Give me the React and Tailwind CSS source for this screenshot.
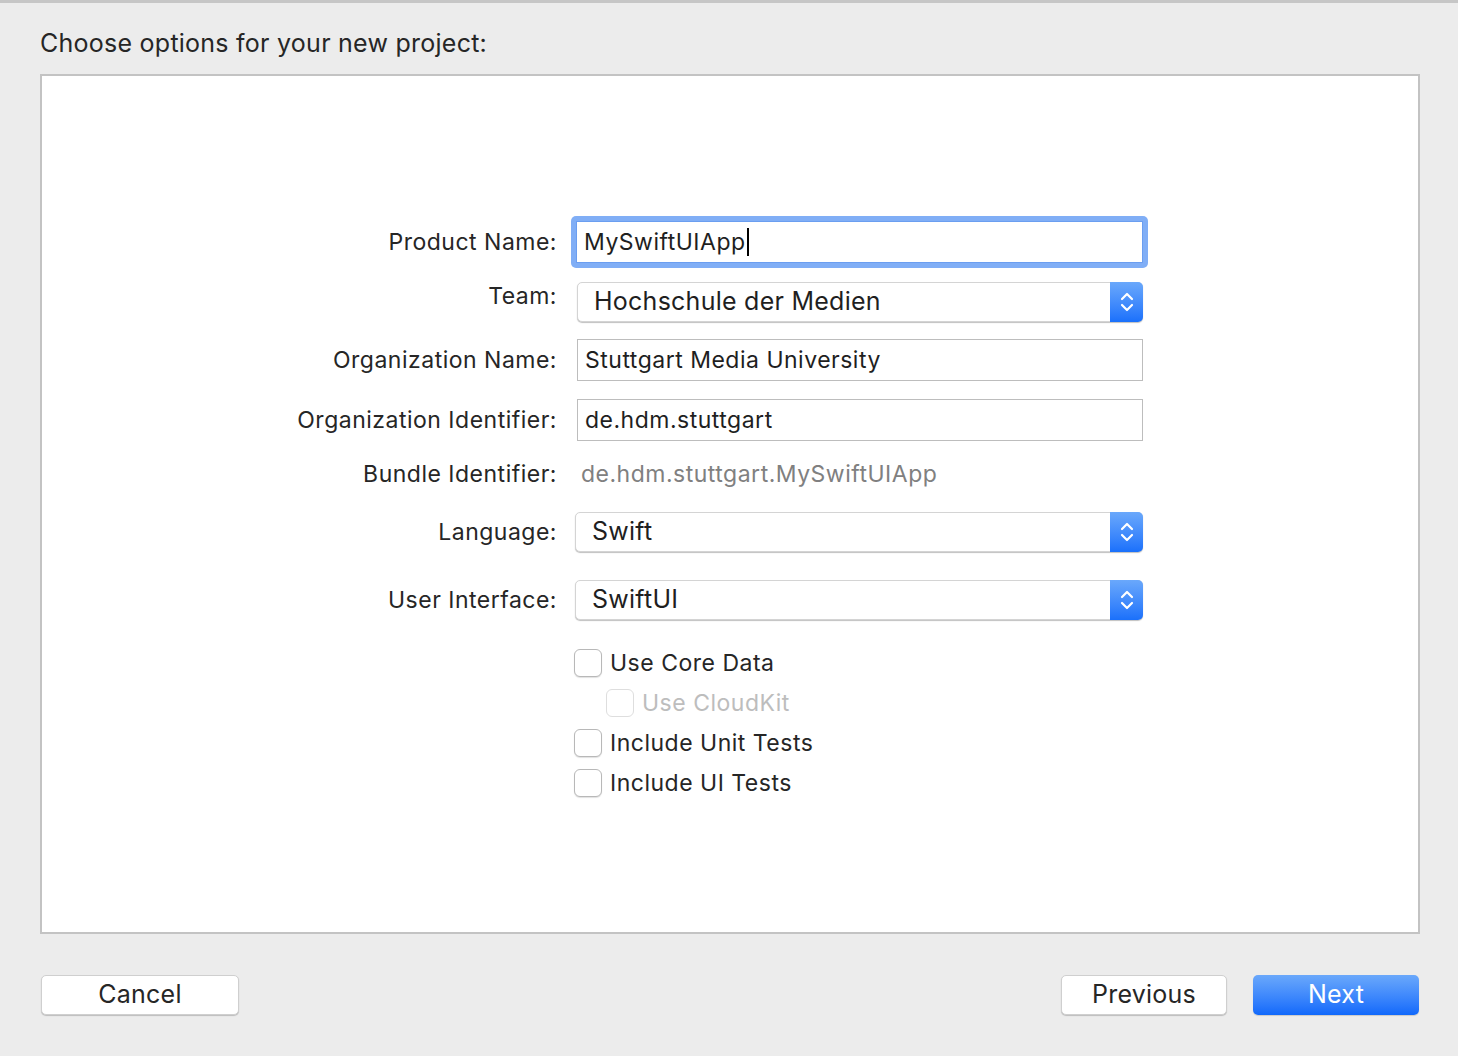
import React from 'react';

const font = { fontFamily: 'Inter, "Liberation Sans", sans-serif' };

const Chevrons = () => (
  <svg width="16" height="26" viewBox="0 0 16 26" fill="none">
    <path d="M3 10 L8 5 L13 10" stroke="white" strokeWidth="2.2" strokeLinecap="round" strokeLinejoin="round" />
    <path d="M3 16 L8 21 L13 16" stroke="white" strokeWidth="2.2" strokeLinecap="round" strokeLinejoin="round" />
  </svg>
);

const Label = ({ children, className = '' }) => (
  <div className={`w-[515px] shrink-0 text-right text-[23px] tracking-[0.5px] text-[#262626] ${className}`}>{children}</div>
);

const TextField = ({ value }) => (
  <div className="ml-[20px] w-[566px] h-[42px] border border-[#bdbdbd] bg-white flex items-center px-[7px] text-[23px] tracking-[0.5px] text-[#1f1f1f]">
    {value}
  </div>
);

const Popup = ({ value, wide }) => (
  <div
    className={`${wide ? 'ml-[18px] w-[568px]' : 'ml-[20px] w-[566px]'} h-[40px] flex rounded-[5px] bg-white border border-[#d4d4d4] shadow-[0_1px_1px_rgba(0,0,0,0.25)]`}
  >
    <div className="flex-1 flex items-center pl-[16px] text-[25px] tracking-[0.25px] text-[#1f1f1f]">{value}</div>
    <div className="w-[33px] -my-px -mr-px rounded-r-[5px] bg-gradient-to-b from-[#6aa8fb] to-[#1a70fb] flex items-center justify-center">
      <Chevrons />
    </div>
  </div>
);

const Checkbox = ({ label, disabled, indent }) => (
  <div className={`flex items-center h-[28px] ${indent ? 'ml-[564px]' : 'ml-[532px]'}`}>
    <div
      className={`w-[28px] h-[28px] rounded-[6px] bg-white border ${
        disabled ? 'border-[#dedede]' : 'border-[#b8b8b8] shadow-[0_1px_1px_rgba(0,0,0,0.12)]'
      }`}
    />
    <span className={`ml-[8px] text-[23px] tracking-[0.5px] ${disabled ? 'text-[#bdbdbd]' : 'text-[#262626]'}`}>{label}</span>
  </div>
);

const btn = 'h-[40px] rounded-[5px] text-[25px] tracking-[0.25px]';

const App = () => {
  return (
    <div style={font} className="w-[1458px] h-[1056px] bg-[#ececec] border-t-[3px] border-[#c6c6c6] flex flex-col">
      <div className="pl-[40px] pt-[22px] h-[71px] text-[25px] tracking-[0.25px] text-[#262626]">
        Choose options for your new project:
      </div>

      <div className="mx-[40px] w-[1380px] h-[860px] bg-white border-2 border-[#c3c3c3] flex flex-col">
        {/* Product Name */}
        <div className="mt-[145px] flex items-center h-[42px]">
          <Label>Product Name:</Label>
          <div className="ml-[14px] p-[5px] rounded-[5px] bg-[#80aef6]">
            <div className="w-[567px] h-[42px] bg-white flex items-center px-[7px] text-[23px] tracking-[0.5px] text-[#1f1f1f] border border-[#6b9ef0]">
              MySwiftUIApp
              <span className="w-[2px] h-[28px] bg-black ml-[1px]" />
            </div>
          </div>
        </div>

        {/* Team */}
        <div className="mt-[19px] flex items-start h-[40px]">
          <Label className="-mt-[3px]">Team:</Label>
          <Popup value="Hochschule der Medien" />
        </div>

        <div className="mt-[17px] flex items-center">
          <Label>Organization Name:</Label>
          <TextField value="Stuttgart Media University" />
        </div>

        <div className="mt-[18px] flex items-center">
          <Label>Organization Identifier:</Label>
          <TextField value="de.hdm.stuttgart" />
        </div>

        <div className="mt-[13px] flex items-center h-[40px]">
          <Label>Bundle Identifier:</Label>
          <div className="ml-[24px] text-[23px] tracking-[0.5px] text-[#808080]">de.hdm.stuttgart.MySwiftUIApp</div>
        </div>

        <div className="mt-[18px] flex items-center h-[40px]">
          <Label>Language:</Label>
          <Popup value="Swift" wide />
        </div>

        <div className="mt-[28px] flex items-center h-[40px]">
          <Label>User Interface:</Label>
          <Popup value="SwiftUI" wide />
        </div>

        <div className="mt-[29px] flex flex-col gap-[12px]">
          <Checkbox label="Use Core Data" />
          <Checkbox label="Use CloudKit" disabled indent />
          <Checkbox label="Include Unit Tests" />
          <Checkbox label="Include UI Tests" />
        </div>
      </div>

      <div className="mt-[41px] mx-[41px] flex items-center">
        <button className={`${btn} w-[198px] bg-white border border-[#cfcfcf] shadow-[0_1px_1px_rgba(0,0,0,0.2)] text-[#262626]`}>
          Cancel
        </button>
        <div className="flex-1" />
        <button className={`${btn} w-[166px] bg-white border border-[#cfcfcf] shadow-[0_1px_1px_rgba(0,0,0,0.2)] text-[#262626]`}>
          Previous
        </button>
        <button
          className={`${btn} ml-[26px] mr-[-2px] w-[166px] bg-gradient-to-b from-[#6aa8fb] to-[#0f68fb] text-white shadow-[0_1px_1px_rgba(0,0,0,0.15)]`}
        >
          Next
        </button>
      </div>
    </div>
  );
};

export default App;
